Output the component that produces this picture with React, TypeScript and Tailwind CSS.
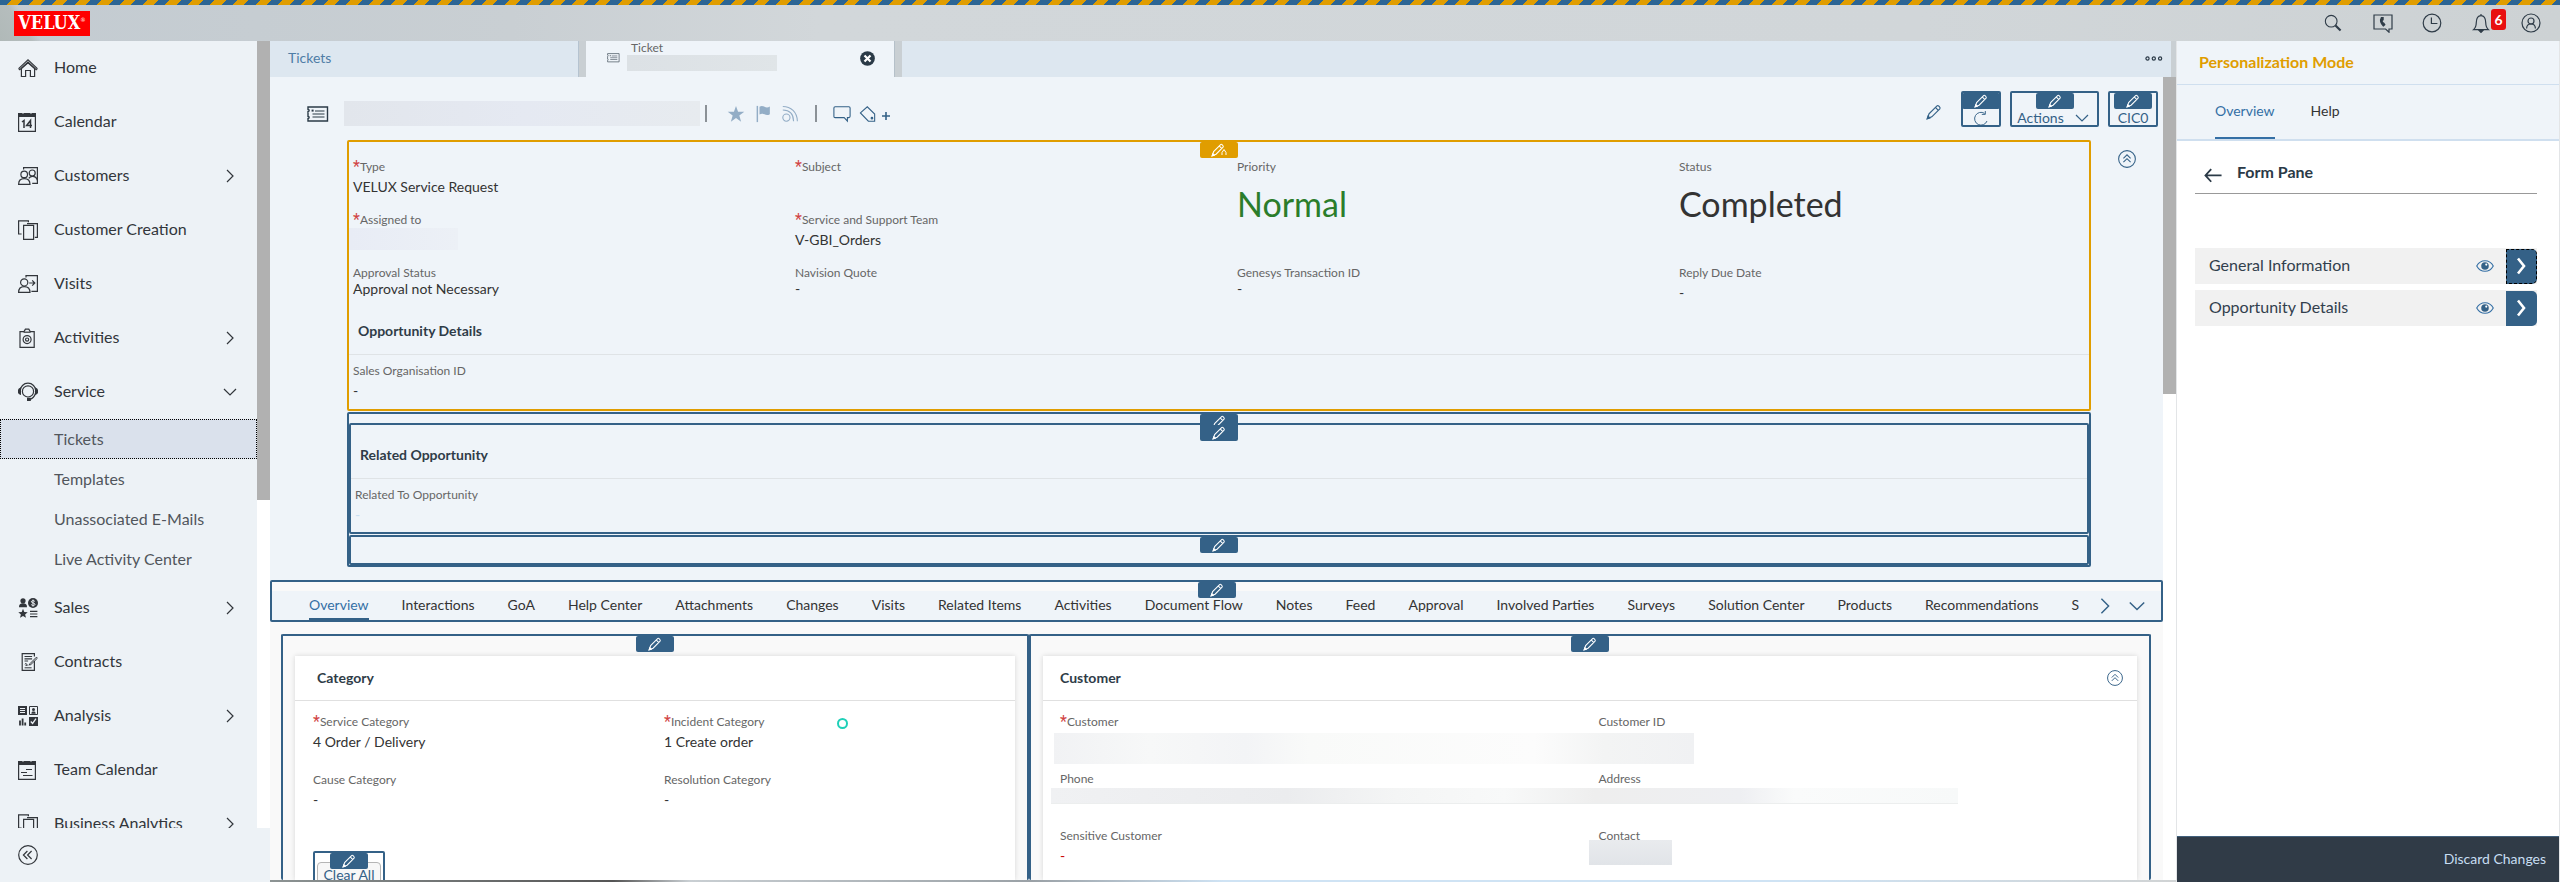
import React from 'react';
import { clsx } from 'clsx';

type IconProps = { className?: string };

interface NavEntry {
  label: string;
  icon: React.FC<IconProps>;
  arrow?: 'right' | 'down';
  children?: string[];
}

/* ---------- icons ---------- */

const Svg: React.FC<React.PropsWithChildren<IconProps & { box?: string }>> = ({ className, box = '0 0 20 20', children }) => (
  <svg
    viewBox={box}
    className={clsx('shrink-0', className)}
    fill="none"
    stroke="currentColor"
    strokeWidth="1.2"
    aria-hidden="true"
  >
    {children}
  </svg>
);

const HomeIcon: React.FC<IconProps> = (p) => (
  <Svg {...p}>
    <path d="M.6 10.6 10 1.8l9.4 8.8M.6 10.6l1.2 1L10 4l8.200 7.600 1.200-1" />
    <path d="M3.400 10.500v8h4.200v-6h4.800v6h4.200v-8L10 4.800z" />
  </Svg>
);

const CalendarIcon: React.FC<IconProps> = (p) => (
  <Svg {...p}>
    <path d="M.6 2.500h16.800v16.900H.6z" />
    <path d="M.6 1.500h3.400v1h2v-1h6v1h2v-1h3.400V4.500H.6z" fill="currentColor" />
    <path d="M4 10l2-1.500V16M12.500 16V8.500L8.600 13.600h5.400" strokeWidth="1.500" />
  </Svg>
);

const TeamCalendarIcon: React.FC<IconProps> = (p) => (
  <Svg {...p}>
    <path d="M.6 2.500h16.800v16.900H.6z" />
    <path d="M.6 1.500h3.400v1h2v-1h6v1h2v-1h3.400V4.500H.6z" fill="currentColor" />
    <path d="M8 9.500h6M3 12.500h6M5 15.500h9.500" />
  </Svg>
);

const CustomersIcon: React.FC<IconProps> = (p) => (
  <Svg {...p}>
    <path d="M5.600 3.500V1.600h13.800v15.800h-5.200" />
    <circle cx="6.200" cy="8.400" r="3.300" />
    <circle cx="14.200" cy="7" r="3" />
    <path d="M.6 18.400c0-4 2-5.800 5.600-5.800s5.800 1.800 5.800 5.800zM10.800 12.400c1-1.600 2-2 3.600-2 2.800 0 4.400 1.400 5 4" />
  </Svg>
);

const CreationIcon: React.FC<IconProps> = (p) => (
  <Svg {...p}>
    <path d="M3.600 14H.6V.8h9.800v1.400" />
    <path d="M5.600 5.400h10v14h-10z" />
    <path d="M9 3.600h10.400v13.800h-2.600" />
  </Svg>
);

const VisitsIcon: React.FC<IconProps> = (p) => (
  <Svg {...p}>
    <path d="M8 3.500V1.600h11.400v15.800h-6" />
    <circle cx="6.200" cy="8.400" r="3.600" />
    <path d="M.6 18.400c0-4 2-5.800 5.600-5.800s5.800 1.800 5.800 5.800z" />
    <path d="M11.200 9h5.600M14.200 6.400 16.800 9l-2.600 2.600" />
  </Svg>
);

const ActivitiesIcon: React.FC<IconProps> = (p) => (
  <Svg {...p}>
    <path d="M2 3.600h4L7.400 1.200h3.400L12.200 3.600h4v15.800H2z" />
    <path d="M5.600 4.200h7" />
    <circle cx="9.100" cy="11.600" r="4" />
    <circle cx="9.100" cy="11.600" r="1.600" />
  </Svg>
);

const ServiceIcon: React.FC<IconProps> = (p) => (
  <Svg {...p}>
    <circle cx="10" cy="9.400" r="5.600" />
    <path d="M2.200 9a7.800 7.800 0 0 1 15.600 0M17.600 11c-1 3.400-3 5.600-6 6.400" />
    <path d="M2.400 6.400C.8 7 .4 8 .4 9.300s.4 2.300 2 2.900zM17.600 6.400c1.600.6 2 1.600 2 2.900s-.4 2.300-2 2.900zM9.600 16.400h2.600v2H9.600z" fill="currentColor" />
  </Svg>
);

const SalesIcon: React.FC<IconProps> = (p) => (
  <Svg {...p}>
    <g fill="currentColor" stroke="none">
      <circle cx="5" cy="2.800" r="2.600" />
      <path d="M1 9.200c0-3 1.200-4 4-4s4 1 4 4z" />
      <path d="m5 10.800 1.300 3.200 3.400.2-2.600 2.200.9 3.400L5 18l-3 1.800.9-3.400L.3 14.200l3.400-.2z" />
      <circle cx="15" cy="5" r="5" />
    </g>
    <path d="M16.800 3.400c-1-1.200-3.400-1-3.400.4 0 1.600 3.600.8 3.600 2.500 0 1.400-2.700 1.600-3.800.3M15 1.600v7" stroke="#edf1f5" strokeWidth="1" />
    <path d="M12 13.400h7.400M12 16h7.400M12 18.600h7.400" />
  </Svg>
);

const ContractsIcon: React.FC<IconProps> = (p) => (
  <Svg {...p}>
    <path d="M16.400 9v9.400H4.200V1.600h12.200v3" />
    <path d="M6.500 4.500h7.600M6.500 6.800h7.600M6.500 9h3.600" />
    <path d="m12 11.600 6.400-6.400 1 1-6.600 6.400-1.400.4zM6.800 12.200c1.400-1.600 2-.4 1.200 1s1.600-.8 2.400 0M6.600 15.800h7" strokeWidth="1" />
  </Svg>
);

const AnalysisIcon: React.FC<IconProps> = (p) => (
  <Svg {...p}>
    <path d="M0 0h9v9H0zM11 11h9v9h-9z" fill="currentColor" stroke="none" />
    <path d="M2 2.500h5M2 4.500h5M2 6.500h5" stroke="#edf1f5" strokeWidth="1" />
    <path d="m12.800 15.500 1.800 2 3.400-4.800" stroke="#edf1f5" strokeWidth="1.300" />
    <path d="M11.500.5h8v8h-8z" strokeWidth="1" />
    <path d="M13.400 7.800c0-1.800.6-2.400 2.100-2.400s2.100.6 2.100 2.400z" fill="currentColor" stroke="none" />
    <circle cx="15.500" cy="3.600" r="1.500" fill="currentColor" stroke="none" />
    <path d="M2 19.400v-5M4.600 19.400v-7M7.200 19.400v-3" strokeWidth="1.800" />
  </Svg>
);

const ChevronRight: React.FC<IconProps> = (p) => (
  <Svg {...p}>
    <path d="m7 4 6 6-6 6" />
  </Svg>
);

const ChevronDown: React.FC<IconProps> = (p) => (
  <Svg {...p}>
    <path d="m4 7 6 6 6-6" />
  </Svg>
);

const DoubleChevron: React.FC<IconProps> = (p) => (
  <Svg {...p}>
    <circle cx="10" cy="10" r="9.300" />
    <path d="M6 9.400 10 5.400l4 4M6 13.600l4-4 4 4" />
  </Svg>
);

const Pencil: React.FC<IconProps> = (p) => (
  <Svg {...p} box="0 0 16 16">
    <path d="M1.500 14.500 3 9.800 11 1.800c1-1 3.900 1.600 2.800 3L5.800 12.800zM9.400 3.400l2.900 2.900" />
    <path d="m1.200 14.800.9-2.600 1.700 1.700z" fill="currentColor" />
  </Svg>
);

const TicketIcon: React.FC<IconProps> = (p) => (
  <Svg {...p} box="0 0 22 16">
    <path d="M1 1h19.500v14H1v-2.500c1.500 0 1.500-2.200 0-2.200V5.700c1.500 0 1.500-2.200 0-2.200z" strokeWidth="1.400" />
    <path d="M8 5h9.500M5.500 8h12M5.500 11h12" strokeWidth="1.200" />
    <path d="M4.600 3.600h2v2h-2z" fill="currentColor" stroke="none" />
  </Svg>
);

/* ---------- data ---------- */

const NAV: NavEntry[] = [
  { label: 'Home', icon: HomeIcon },
  { label: 'Calendar', icon: CalendarIcon },
  { label: 'Customers', icon: CustomersIcon, arrow: 'right' },
  { label: 'Customer Creation', icon: CreationIcon },
  { label: 'Visits', icon: VisitsIcon },
  { label: 'Activities', icon: ActivitiesIcon, arrow: 'right' },
  {
    label: 'Service',
    icon: ServiceIcon,
    arrow: 'down',
    children: ['Tickets', 'Templates', 'Unassociated E-Mails', 'Live Activity Center'],
  },
  { label: 'Sales', icon: SalesIcon, arrow: 'right' },
  { label: 'Contracts', icon: ContractsIcon },
  { label: 'Analysis', icon: AnalysisIcon, arrow: 'right' },
  { label: 'Team Calendar', icon: TeamCalendarIcon },
  { label: 'Business Analytics', icon: CreationIcon, arrow: 'right' },
];

const TABS = [
  'Overview',
  'Interactions',
  'GoA',
  'Help Center',
  'Attachments',
  'Changes',
  'Visits',
  'Related Items',
  'Activities',
  'Document Flow',
  'Notes',
  'Feed',
  'Approval',
  'Involved Parties',
  'Surveys',
  'Solution Center',
  'Products',
  'Recommendations',
  'S',
];

/* ---------- small parts ---------- */

const EditBadge: React.FC<{ active?: boolean }> = ({ active }) => (
  <button
    type="button"
    aria-label="Edit"
    className={clsx(
      'absolute top-0 left-1/2 z-10 flex h-4 w-[38px] -translate-x-1/2 items-center justify-center rounded-[2px] text-white',
      active ? 'bg-[#e09d00]' : 'bg-[#346187]'
    )}
  >
    <Pencil className="size-[14px]" />
    {active && (
      <svg viewBox="0 0 6 8" className="-ml-1 mt-1 h-2 w-[6px]" fill="none" stroke="currentColor" aria-hidden="true">
        <path d="M1 7V4.500L3 1.500l2 3V7" />
      </svg>
    )}
  </button>
);

const Frame: React.FC<React.PropsWithChildren<{ active?: boolean; className?: string }>> = ({
  active,
  className,
  children,
}) => (
  <div className={clsx('relative rounded-[2px] border-2', active ? 'border-[#e09d00]' : 'border-[#346187]', className)}>
    <EditBadge active={active} />
    {children}
  </div>
);

interface FieldProps {
  label: string;
  value?: string;
  required?: boolean;
  compact?: boolean;
  tone?: string;
  className?: string;
}

const Field: React.FC<FieldProps> = ({ label, value, required, compact, tone = 'text-[#333]', className }) => (
  <div className={className}>
    <div className="flex h-4 text-xs leading-4 text-[#666]">
      {required && <span className="font-[Roboto,sans-serif] text-base leading-4 text-[#d14343]">*</span>}
      {label}
    </div>
    <div className={clsx('text-sm', tone, compact ? 'h-4 leading-4' : 'mt-0.5 h-5 leading-5')}>{value}</div>
  </div>
);

const BigField: React.FC<FieldProps> = ({ label, value, tone }) => (
  <div className="row-span-2">
    <div className="text-xs leading-4 text-[#666]">{label}</div>
    <div className={clsx('mt-2 text-[34px] leading-[42px]', tone)}>{value}</div>
  </div>
);

/* ---------- regions ---------- */

const TopBar = () => (
  <header className="flex h-9 shrink-0 items-center justify-between bg-[linear-gradient(to_right,#c3cbd1,#c9cfd3_20%,#d2d7da_32%,#d1d6d9_75%,#cdd2d4)] pr-[19px]">
    <div className="flex h-9 w-[200px] items-center bg-[linear-gradient(55deg,#b0b9b8_0,#b5bdbd_26px,transparent_34px)] pl-[14px]">
      <a
        href="#"
        className="flex h-[25px] w-[76px] items-center justify-center bg-[#ff0000] font-['DejaVu_Serif_Condensed','DejaVu_Serif',serif] text-lg leading-none font-bold text-white"
      >
        VELUX
        <sup className="text-[6px] font-normal">®</sup>
      </a>
    </div>
    <div className="flex items-center text-[#2f3c48]">
      <button type="button" aria-label="Search">
        <Svg className="size-[18px]">
          <circle cx="8" cy="8" r="6.500" />
          <path d="m12.800 12.800 5.600 5.600" strokeWidth="2.400" />
        </Svg>
      </button>
      <button type="button" aria-label="Phone" className="ml-[31px]">
        <Svg className="size-5">
          <path d="M1 2h18v14h-3v3.200L12.600 16H1z" />
          <path d="M8.400 4.600c-1.600 3-.8 5.800 2 8.400l1.400-1.400-1.200-1.600-.8.200c-.6-1-.8-2-.6-3l.9-.3V4.600z" fill="currentColor" />
        </Svg>
      </button>
      <button type="button" aria-label="Recent" className="ml-[29px]">
        <Svg className="size-5">
          <circle cx="10" cy="10" r="8.800" />
          <path d="M9.400 4.600v5.900h6" />
        </Svg>
      </button>
      <button type="button" aria-label="Notifications" className="relative ml-[29px]">
        <Svg className="size-5">
          <path d="M2.600 16.600c2.400-2 2.600-4 2.700-7C5.400 5.400 7 2.600 10 2.600s4.600 2.800 4.700 7c.1 3 .3 5 2.700 7zM10 2.600V1" />
          <path d="M8 17.400h4L10 19.400z" fill="currentColor" />
        </Svg>
        <span className="absolute -top-[4px] left-[20px] flex h-[21px] w-[15px] items-center justify-center rounded-[3px] bg-[#e81010] text-sm font-bold text-white">
          6
        </span>
      </button>
      <button type="button" aria-label="Profile" className="ml-[30px]">
        <Svg className="size-5">
          <circle cx="10" cy="10" r="9" />
          <circle cx="10" cy="8" r="3" />
          <path d="M5.600 15.600c0-3 1.600-4.600 4.400-4.600s4.400 1.600 4.400 4.600" />
        </Svg>
      </button>
    </div>
  </header>
);

const Sidebar = () => (
  <aside className="flex w-[270px] shrink-0 flex-col bg-[#edf2f6] text-base text-[#32363b]">
    <div className="flex min-h-0 flex-1">
      <nav className="min-w-0 flex-1 overflow-hidden">
        {NAV.map(({ label, icon: Icon, arrow, children }) => (
          <div key={label}>
            <button type="button" className="flex h-[54px] w-full items-center pr-[17px] pl-[18px]">
              <Icon className="size-5" />
              <span className="ml-4 flex-1 pb-0.5 text-left">{label}</span>
              {arrow === 'right' && <ChevronRight className="size-5" />}
              {arrow === 'down' && <ChevronDown className="size-5" />}
            </button>
            {children && (
              <ul className="pb-0.5">
                {children.map((child, i) => (
                  <li key={child}>
                    <a
                      href="#"
                      className={clsx(
                        'flex h-10 items-center border pl-[53px] text-[#51565c]',
                        i === 0 ? 'border-dotted border-black bg-[#dae1ec]' : 'border-transparent'
                      )}
                    >
                      {child}
                    </a>
                  </li>
                ))}
              </ul>
            )}
          </div>
        ))}
      </nav>
      <div className="w-[13px] shrink-0 bg-white">
        <div className="h-[58.3%] bg-[#b1b1b1]" />
      </div>
    </div>
    <div className="flex h-[54px] shrink-0 items-center pl-[18px]">
      <button type="button" aria-label="Collapse navigation">
        <DoubleChevron className="size-5 -rotate-90" />
      </button>
    </div>
  </aside>
);

const WindowTabs = () => (
  <div className="flex h-9 shrink-0 gap-[7px] bg-[#c9cfd3] pr-[5px]">
    <a href="#" className="flex w-[309px] items-center border-r border-[#b5c3d0] bg-[#dde7f0] pb-0.5 pl-[18px] text-sm text-[#4f7da6]">
      Tickets
    </a>
    <div className="flex w-[309px] items-center border-r border-[#b5c0c9] bg-[#eff4f9] pr-[19px] pb-0.5 pl-[21px]">
      <TicketIcon className="w-[13px] text-[#5d6873]" />
      <div className="ml-[7px] flex-1 self-start">
        <div className="pl-1 text-xs leading-[14px] text-[#666]">Ticket</div>
        <div className="h-4 w-[150px] bg-linear-to-r from-[#dce1e5] to-[#e0e5e8]" />
      </div>
      <button type="button" aria-label="Close tab">
        <Svg className="size-[15px]">
          <circle cx="10" cy="10" r="9.800" fill="#2b3a47" stroke="none" />
          <path d="m6 6 8 8M14 6l-8 8" stroke="#fff" strokeWidth="3" />
        </Svg>
      </button>
    </div>
    <div className="flex flex-1 items-center justify-end bg-[#dde7f0] pr-2 pb-0.5">
      <button type="button" aria-label="More">
        <Svg className="h-[5px] w-[18px] text-[#2b3a47]" box="0 0 18 5">
          <circle cx="2.500" cy="2.500" r="1.600" />
          <circle cx="8.800" cy="2.500" r="1.600" />
          <circle cx="15.100" cy="2.500" r="1.600" />
        </Svg>
      </button>
    </div>
  </div>
);

const TitleRow = () => (
  <div className="flex h-[63px] items-center justify-between pr-[5px] pl-[37px]">
    <div className="mt-[10px] flex items-center text-[#93adc6]">
      <TicketIcon className="w-[22px] text-[#2b3a47]" />
      <div className="ml-[15px] h-[25px] w-[356px] bg-linear-to-r from-[#e2e6ec] via-[#e5e9f2] to-[#e7ebef]" />
      <span className="ml-[5px] h-[17px] w-[2px] bg-[#8b9197]" />
      <button type="button" aria-label="Favorite" className="ml-5">
        <Svg className="size-[18px]">
          <path d="m10 1 2.300 6.500h6.900l-5.500 4.200 2 6.900L10 14.500l-5.700 4.100 2-6.900L.8 7.500h6.900z" fill="currentColor" stroke="none" />
        </Svg>
      </button>
      <button type="button" aria-label="Flag" className="ml-[10px]">
        <Svg className="size-[18px]">
          <path d="M2.600 1v18" strokeWidth="1.600" />
          <path d="M5 2c2-1.400 4-1 5.600 0s4 1 5.900-.2v8.400c-2 1.200-4 1.200-5.900.2S7 9.200 5 10.600z" fill="currentColor" stroke="none" />
        </Svg>
      </button>
      <button type="button" aria-label="Follow" className="ml-2">
        <Svg className="size-[18px]">
          <circle cx="6" cy="14" r="4" />
          <path d="M2 5.600c7.600 0 11.800 4.800 12 12.400M2 1.600C11 1.600 18 8 18.200 18" />
        </Svg>
      </button>
      <span className="ml-4 h-[17px] w-[2px] bg-[#8b9197]" />
      <button type="button" aria-label="Chat" className="ml-4 text-[#346187]">
        <Svg className="size-[18px]">
          <path d="M1 3.400c0-1 .5-1.400 1.400-1.400h15.200c1 0 1.400.5 1.400 1.400v9.200c0 1-.4 1.400-1.400 1.400H16v4l-3.600-4h-10C1.500 14 1 13.600 1 12.600z" />
        </Svg>
      </button>
      <button type="button" aria-label="Add tag" className="ml-2 flex items-center text-[#346187]">
        <Svg className="size-[18px]">
          <path d="M1.600 8.800 9.200 2l8.200 8v8h-7z" />
          <circle cx="14.400" cy="14.600" r=".9" fill="currentColor" />
        </Svg>
        <Svg className="ml-1 mt-1 size-[10px]" box="0 0 10 10">
          <path d="M5 1v8M1 5h8" strokeWidth="1.600" />
        </Svg>
      </button>
    </div>
    <div className="flex items-center text-[#346187]">
      <button type="button" aria-label="Edit title" className="mt-[7px] mr-[19px]">
        <Pencil className="size-4" />
      </button>
      <Frame className="flex h-9 w-10 items-end justify-center">
        <button type="button" aria-label="Refresh" className="h-[14px] overflow-hidden">
          <Svg className="size-4">
            <path d="M17.500 12.500a8 8 0 1 1-3-9.500M15.400 0v4.200h-4.400" />
          </Svg>
        </button>
      </Frame>
      <Frame className="ml-[9px] flex h-9 w-[89px] items-end justify-center">
        <button type="button" className="flex h-[14px] items-center text-sm leading-[14px]">
          Actions
          <ChevronDown className="ml-2 size-5" />
        </button>
      </Frame>
      <Frame className="ml-[9px] flex h-9 w-[50px] items-end justify-center">
        <button type="button" className="h-[14px] text-sm leading-[14px]">
          CIC0
        </button>
      </Frame>
    </div>
  </div>
);

const SectionTitle: React.FC<{ text: string }> = ({ text }) => (
  <h2 className="border-b border-[#dfe3e6] pb-[13px] pl-[9px] text-sm leading-5 font-bold text-[#2f3c48]">{text}</h2>
);

const HeaderForm = () => (
  <section className="flex pl-[77px]">
    <div className="min-w-0 flex-1">
      <Frame active>
        <div className="grid grid-cols-[442fr_442fr_442fr_410fr] gap-y-[15px] pt-[17px] pl-1">
          <Field label="Type" required value="VELUX Service Request" />
          <Field label="Subject" required />
          <BigField label="Priority" value="Normal" tone="text-[#2b7d2b]" />
          <BigField label="Status" value="Completed" tone="text-[#333]" />
          <div className="relative">
            <Field label="Assigned to" required />
            <div className="absolute top-4 -left-1 h-[22px] w-[109px] bg-linear-to-r from-[#e8ecf5] to-[#ecf0f6]" />
          </div>
          <Field label="Service and Support Team" required value="V-GBI_Orders" />
          <Field label="Approval Status" value="Approval not Necessary" compact />
          <Field label="Navision Quote" value="-" compact />
          <Field label="Genesys Transaction ID" value="-" compact />
          <Field label="Reply Due Date" value="-" />
        </div>
        <div className="pt-[18px]">
          <SectionTitle text="Opportunity Details" />
          <Field label="Sales Organisation ID" value="-" className="py-2 pl-1" />
        </div>
      </Frame>
      <Frame className="mt-px pt-[9px]">
        <Frame className="pt-5">
          <SectionTitle text="Related Opportunity" />
          <Field label="Related To Opportunity" value="-" tone="text-[#c9dff2]" className="pt-2 pb-[7px] pl-1" />
        </Frame>
        <Frame className="mt-px h-[30px]" />
      </Frame>
    </div>
    <div className="flex w-[72px] shrink-0 items-start justify-center pt-[10px] text-[#346187]">
      <button type="button" aria-label="Collapse header">
        <DoubleChevron className="size-[18px]" />
      </button>
    </div>
  </section>
);

const FacetTabs = () => (
  <Frame className="mt-[13px] shrink-0 bg-[#f9f9f9] pt-[9px]">
    <div className="flex h-[29px] items-stretch bg-[#eff4f9] pr-3 pl-[37px]">
      <div role="tablist" className="flex min-w-0 flex-1 gap-[33px] overflow-hidden text-sm text-[#333]">
        {TABS.map((tab, i) => (
          <button
            key={tab}
            type="button"
            role="tab"
            aria-selected={i === 0}
            className={clsx('border-b-2 whitespace-nowrap', i === 0 ? 'border-[#346187] text-[#346fa5]' : 'border-transparent')}
          >
            {tab}
          </button>
        ))}
      </div>
      <div className="ml-[14px] flex items-center gap-2 text-[#346187]">
        <button type="button" aria-label="Scroll tabs">
          <ChevronRight className="size-6" />
        </button>
        <button type="button" aria-label="All tabs">
          <ChevronDown className="size-6" />
        </button>
      </div>
    </div>
  </Frame>
);

const Card: React.FC<React.PropsWithChildren<{ title: string; collapsible?: boolean; inset: string }>> = ({
  title,
  collapsible,
  inset,
  children,
}) => (
  <div className="relative h-full bg-white shadow-[0_0_5px_rgba(0,0,0,0.14)]">
    <div className={clsx('flex h-[45px] items-center justify-between border-b border-[#e0e0e0] pr-[14px]', inset)}>
      <h2 className="text-sm font-bold text-[#2f3c48]">{title}</h2>
      {collapsible && (
        <button type="button" aria-label="Collapse card" className="text-[#346187]">
          <DoubleChevron className="size-4" />
        </button>
      )}
    </div>
    {children}
  </div>
);

const Panes = () => (
  <div className="flex min-h-0 flex-1 bg-[#f9f9f9] pt-3 pr-3 pl-[11px]">
    <Frame className="w-2/5 border-b-0 px-3 pt-5">
      <Card title="Category" inset="pl-[22px]">
        <div className="grid grid-cols-2 gap-y-5 pt-[13px] pl-[18px]">
          <Field label="Service Category" required value="4 Order / Delivery" />
          <Field label="Incident Category" required value="1 Create order" />
          <Field label="Cause Category" value="-" />
          <Field label="Resolution Category" value="-" />
          <Frame className="mt-[21px] w-[72px] px-[2px] pt-[9px]">
            <button type="button" className="h-[34px] w-full rounded border border-[#b5b5b5] bg-[#f7f7f7] pb-2 text-sm whitespace-nowrap text-[#346187]">
              Clear All
            </button>
          </Frame>
        </div>
        <span className="absolute top-[62px] left-[542px] size-[11px] rounded-full border-2 border-[#1fd0b8]" />
      </Card>
    </Frame>
    <Frame className="w-3/5 border-b-0 px-3 pt-5">
      <Card title="Customer" collapsible inset="pl-[17px]">
        <div className="grid grid-cols-2 gap-y-[19px] pt-[13px] pl-[17px]">
          <Field label="Customer" required />
          <Field label="Customer ID" />
          <Field label="Phone" />
          <Field label="Address" />
          <Field label="Sensitive Customer" value="-" tone="text-[#c00]" />
          <div className="relative">
            <Field label="Contact" />
            <div className="absolute top-3 -left-[10px] h-[25px] w-[83px] bg-linear-to-b from-[#e9ebee] to-[#e1e4e8]" />
          </div>
        </div>
        <div className="absolute top-[77px] left-[11px] h-[31px] w-[640px] bg-[linear-gradient(to_right,#f1f2f4,#f7f8f8_15%,#f3f4f6_30%,#f9faf9_40%,#fcfcfc_75%,#f3f4f4_86%,#f0f1f3)]" />
        <div className="absolute top-[132px] left-2 h-4 w-[907px] border-b border-[#eceeee] bg-[linear-gradient(to_right,#f0f1f3,#ebecee_26%,#f4f5f5_38%,#f8f9f9_50%,#eeeeee_60%,#eeeff2_76%,#fafbfb_82%,#f7f9f9)]" />
      </Card>
    </Frame>
  </div>
);

const RowButton: React.FC<{ label: string; focused?: boolean }> = ({ label, focused }) => (
  <li className="flex h-9 items-center bg-[#f1f1f1] pl-[14px] text-base text-[#32404d]">
    <span className="flex-1 pb-0.5">{label}</span>
    <button type="button" aria-label={`Toggle ${label}`} className="mr-3 text-[#346fa5]">
      <Svg className="size-[18px]">
        <path d="M.8 10C3 6 6.200 4.200 10 4.200S17 6 19.200 10C17 14 13.800 15.800 10 15.800S3 14 .8 10z" />
        <circle cx="10" cy="10" r="4.200" fill="#346187" stroke="none" />
        <circle cx="11.400" cy="8.400" r="1.200" fill="#fff" stroke="none" />
      </Svg>
    </button>
    <button
      type="button"
      aria-label={`Open ${label}`}
      className={clsx(
        'flex h-[35px] w-[31px] items-center justify-center rounded-r-[5px] bg-[#346187] text-white',
        focused && 'border border-dashed border-black'
      )}
    >
      <Svg className="size-5">
        <path d="m6 2.500 6 7.500-6 7.500" strokeWidth="2.600" />
      </Svg>
    </button>
  </li>
);

const PersonalizationPanel = () => (
  <aside className="flex w-[384px] shrink-0 flex-col border-x border-[#e3e5e7] bg-white text-sm">
    <h1 className="flex h-[44px] shrink-0 items-center border-b border-[#cfdfef] bg-[#eff4f9] pb-0.5 pl-[22px] text-base font-bold text-[#e09d00]">
      Personalization Mode
    </h1>
    <div role="tablist" className="flex h-14 shrink-0 gap-9 border-b-2 border-[#cfdfef] bg-[#eff4f9] pl-[38px]">
      <button type="button" role="tab" aria-selected="true" className="border-b-2 border-[#346fa5] text-[#346fa5]">
        Overview
      </button>
      <button type="button" role="tab" aria-selected="false" className="border-b-2 border-transparent text-[#333]">
        Help
      </button>
    </div>
    <div className="flex-1 pt-4 pr-[22px] pl-[18px]">
      <div className="flex h-[37px] items-center border-b border-[#999] pl-[9px] text-[#2b3a47]">
        <button type="button" aria-label="Back">
          <Svg className="size-[18px]">
            <path d="M19.500 10.500H1.600M8 3.500 1.600 10.500 8 17.500" strokeWidth="2" />
          </Svg>
        </button>
        <h2 className="ml-[15px] pb-[6px] text-base font-bold">Form Pane</h2>
      </div>
      <ul className="mt-[54px] flex flex-col gap-[6px]">
        <RowButton label="General Information" focused />
        <RowButton label="Opportunity Details" />
      </ul>
    </div>
    <div className="flex h-[46px] shrink-0 items-center justify-end border-t border-[#41607c] bg-[#303b47] pr-[13px] pb-0.5">
      <button type="button" className="text-sm text-[#c7def2]">
        Discard Changes
      </button>
    </div>
  </aside>
);

export default function App() {
  return (
    <div className="flex h-screen flex-col overflow-hidden bg-white font-[Lato,'Noto_Sans',sans-serif]">
      <div className="h-[5px] shrink-0 bg-[repeating-linear-gradient(135deg,#2c6594_0,#2c6594_8px,#e09d00_8px,#e09d00_16px)]" />
      <TopBar />
      <div className="flex min-h-0 flex-1">
        <Sidebar />
        <main className="flex min-w-0 flex-1 flex-col">
          <WindowTabs />
          <div className="flex min-h-0 flex-1">
            <div className="flex min-w-0 flex-1 flex-col overflow-hidden bg-[#eff4f9]">
              <TitleRow />
              <HeaderForm />
              <FacetTabs />
              <Panes />
            </div>
            <div className="w-[13px] shrink-0 bg-white">
              <div className="h-[39.5%] bg-[#b1b1b1]" />
            </div>
          </div>
          <div className="h-0.5 shrink-0 bg-[linear-gradient(to_right,#8d9494,#555_18%,#c9cfd3_22%,#9aa1a6_40%,#cfe3f4_50%,#cfe3f4_80%,#d0d3d4)]" />
        </main>
        <PersonalizationPanel />
      </div>
    </div>
  );
}
